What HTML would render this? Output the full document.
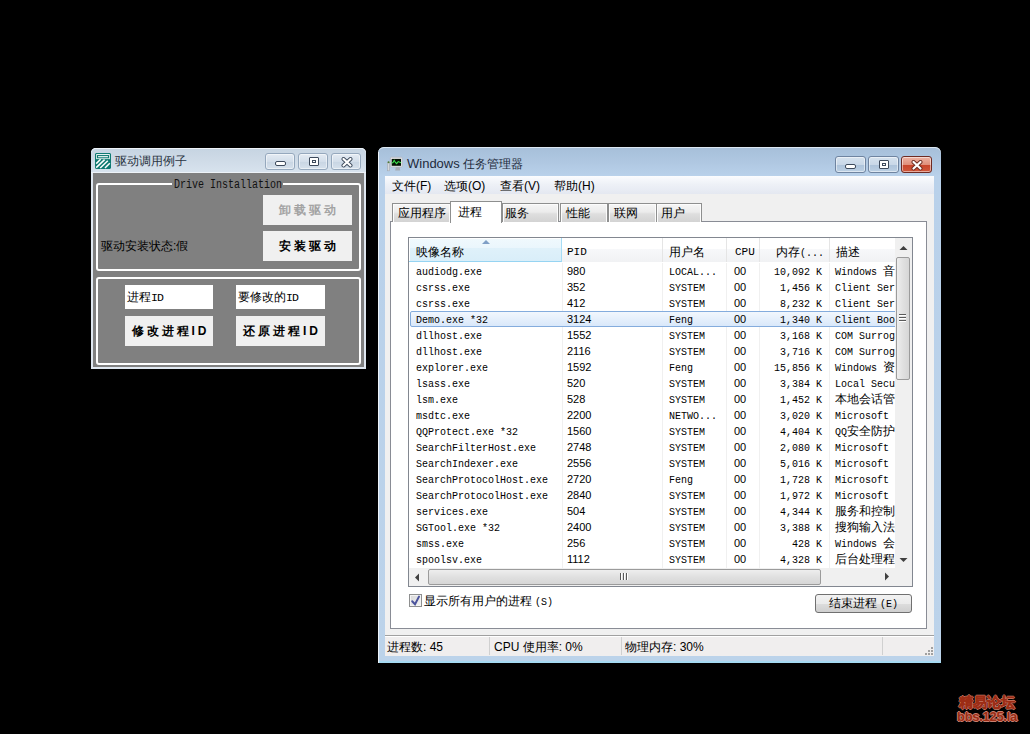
<!DOCTYPE html>
<html><head><meta charset="utf-8">
<style>
*{margin:0;padding:0;box-sizing:border-box}
html,body{width:1030px;height:734px;background:#000;overflow:hidden;font-family:"Liberation Sans",sans-serif;}
.a{position:absolute}
.t{position:absolute;white-space:nowrap;line-height:1}
/* left window */
#lw{left:91px;top:148px;width:275px;height:221px;background:#dfe7f0;border-radius:5px 5px 0 0;}
.cap{position:absolute;top:5px;width:30px;height:17px;border:1px solid #95a8bd;border-radius:3px;background:linear-gradient(#e4ebf3,#d3deea 50%,#c8d5e3 51%,#d6e1ec);box-shadow:inset 0 0 0 1px rgba(255,255,255,.5)}
.gb{position:absolute;border:2px solid #fff;border-radius:3px}
.btn{position:absolute;background:#f0f0f0;font-weight:bold;text-align:center;}
.edit{position:absolute;background:#fff;}
/* task manager */
#tm{left:378px;top:147px;width:563px;height:516px;background:linear-gradient(#a6bfd9,#b0c8e2 16px,#b9d1ea 29px,#bcd3ea);border-radius:6px 6px 0 0;box-shadow:inset 0 1px 0 #dde8f2}
.mono{font-family:"Liberation Mono",monospace;}
.tab{position:absolute;top:203px;height:19px;border:1px solid #8e8f8f;border-bottom:none;background:linear-gradient(#f6f6f6,#ebebeb 45%,#dedede 55%,#d3d3d3);box-shadow:inset 1px 1px 0 #fcfcfc,inset -1px 0 0 #fcfcfc;font-size:12px;}
.r{font-size:10px;color:#000}
.cj{font-size:12px;line-height:0}
.pid{font-size:11px;color:#000}
.row{position:absolute;left:0;width:486px;height:16px}
</style></head><body>

<!-- LEFT WINDOW -->
<div id="lw" class="a">
  <div class="a" style="left:0;top:0;width:275px;height:25px;background:linear-gradient(#c6d4e2,#cfdbe7 50%,#d8e3ee);border-radius:5px 5px 0 0;box-shadow:inset 0 1px 0 #eef3f8,inset 0 -1px 0 #eef3f8"></div>
  <div class="a" style="left:2px;top:25px;width:271px;height:194px;background:#808080"></div>
</div>


<!-- left window content -->
<svg class="a" style="left:95px;top:153px" width="16" height="16" viewBox="0 0 16 16">
 <path d="M1 0 H15 L16 1 V15 L15 16 H1 L0 15 V1 Z" fill="#0f7a72"/>
 <rect x="1.2" y="1.1" width="13.6" height="5.2" fill="#fff"/>
 <rect x="2.5" y="2.6" width="11" height="2.2" fill="none" stroke="#0f7a72" stroke-width="1.1"/>
 <rect x="1.2" y="6.3" width="13.6" height="8.6" fill="#0f7a72"/>
 <path d="M1.2 10.6 L5.6 6.3 M1.2 14.6 L9.6 6.6 M5.2 15 L12.8 7.8 M10 15 L14.8 10.2" stroke="#fff" stroke-width="1.5"/>
</svg>
<div class="t" style="left:115px;top:155px;font-size:12px;color:#2a3442">驱动调用例子</div>
<div class="cap" style="left:265px;top:153px"><div class="a" style="left:9px;top:7px;width:11px;height:5px;border:1px solid #3d4a5c;background:#fff;border-radius:2px"></div></div>
<div class="cap" style="left:298px;top:153px"><div class="a" style="left:10px;top:3px;width:10px;height:9px;border:1px solid #3d4a5c;border-radius:1px;background:#fff"><div class="a" style="left:2px;top:2px;width:4px;height:3px;border:1px solid #3d4a5c"></div></div></div>
<div class="cap" style="left:331px;top:153px"><svg class="a" style="left:8px;top:3px" width="14" height="11" viewBox="0 0 14 11"><path d="M3.5 2 L10.5 8.5 M10.5 2 L3.5 8.5" stroke="#3d4a5c" stroke-width="4" stroke-linecap="round"/><path d="M3.5 2 L10.5 8.5 M10.5 2 L3.5 8.5" stroke="#fff" stroke-width="2.2" stroke-linecap="round"/></svg></div>

<div class="gb" style="left:96px;top:183px;width:265px;height:88px"></div>
<div class="t mono" style="left:172px;top:180px;height:10px;font-size:10px;color:#111;background:#808080;padding:0 1px 0 2px;transform:scaleY(1.2);transform-origin:0 0">Drive Installation</div>
<div class="btn" style="left:263px;top:195px;width:89px;height:30px;color:#a3a3a3;font-size:12px;line-height:30px;letter-spacing:3px;padding-left:3px">卸载驱动</div>
<div class="btn" style="left:263px;top:231px;width:89px;height:30px;color:#000;font-size:12px;line-height:30px;letter-spacing:3px;padding-left:3px">安装驱动</div>
<div class="t" style="left:101px;top:240px;font-size:12px;color:#000">驱动安装状态:假</div>

<div class="gb" style="left:96px;top:277px;width:265px;height:88px"></div>
<div class="edit" style="left:125px;top:285px;width:88px;height:24px"></div>
<div class="t" style="left:127px;top:291px;font-size:12px;color:#000">进程<span class="mono" style="font-size:11.5px;letter-spacing:-1px">ID</span></div>
<div class="edit" style="left:236px;top:285px;width:89px;height:24px"></div>
<div class="t" style="left:238px;top:291px;font-size:12px;color:#000">要修改的<span class="mono" style="font-size:11.5px;letter-spacing:-1px">ID</span></div>
<div class="btn" style="left:125px;top:316px;width:88px;height:30px;color:#000;font-size:12px;line-height:30px;letter-spacing:3px;padding-left:3px">修改进程ID</div>
<div class="btn" style="left:236px;top:316px;width:89px;height:30px;color:#000;font-size:12px;line-height:30px;letter-spacing:3px;padding-left:3px">还原进程ID</div>

<!-- TASK MANAGER -->
<div id="tm" class="a"></div>
<div class="a" style="left:385px;top:176px;width:549px;height:19px;background:linear-gradient(#fbfcfe,#eef1f7 45%,#e4e8f1);border-bottom:1px solid #c8ccd6"></div>
<div class="a" style="left:385px;top:194px;width:549px;height:441px;background:#f0f0f0"></div>
<div class="a" style="left:390px;top:221px;width:537px;height:408px;background:#fff;border:1px solid #898c95"></div>
<div class="a" style="left:385px;top:635px;width:549px;height:21px;background:#f0eeee;border-top:1px solid #a0a0a0;box-shadow:inset 0 1px 0 #fff"></div>
<div class="a" style="left:378px;top:661px;width:563px;height:2px;background:#a6daf2"></div>
<div class="a" style="left:378px;top:152px;width:1px;height:511px;background:#eef4fa"></div>


<!-- tm title -->
<svg class="a" style="left:387px;top:156px" width="17" height="16" viewBox="0 0 17 16">
 <rect x="0.6" y="6.2" width="2" height="8.6" fill="#d4d8dc" stroke="#a4aab2" stroke-width="0.6"/>
 <circle cx="1.6" cy="6.3" r="1" fill="#4c7a34"/>
 <path d="M8.8 11 L12.6 11 L13.2 14.6 L8.2 14.6 Z" fill="#a6acb4"/>
 <rect x="3.4" y="1.2" width="11.8" height="9.8" rx="0.8" fill="#e8e8ec" stroke="#b4b8c0" stroke-width="0.8"/>
 <rect x="4.7" y="2.9" width="9.3" height="6.9" fill="#041204"/>
 <path d="M4.7 7 L6 6.6 L7.2 4.3 L8.4 6.4 L9.6 7.6 L11.2 5.6 L14 6.8" stroke="#3ee04e" stroke-width="1.1" fill="none"/>
</svg>
<div class="t" style="left:407px;top:157px;font-size:13px;color:#1e2b3c">Windows <span style="font-size:12px">任务管理器</span></div>
<div class="cap" style="left:835px;top:156px;width:31px;height:17px;border-color:#6f84a0;background:linear-gradient(#d6e2ee,#c9d8e8 50%,#adc3da 52%,#bcd0e4)"><div class="a" style="left:9px;top:7px;width:11px;height:5px;border:1px solid #3d4a5c;background:#fff;border-radius:2px"></div></div>
<div class="cap" style="left:868px;top:156px;width:31px;height:17px;border-color:#6f84a0;background:linear-gradient(#d6e2ee,#c9d8e8 50%,#adc3da 52%,#bcd0e4)"><div class="a" style="left:10px;top:3px;width:10px;height:9px;border:1px solid #3d4a5c;border-radius:1px;background:#fff"><div class="a" style="left:2px;top:2px;width:4px;height:3px;border:1px solid #3d4a5c"></div></div></div>
<div class="cap" style="left:901px;top:156px;width:31px;height:17px;border-color:#6e2a22;background:linear-gradient(#eeb2a3,#e0907c 50%,#c8442a 52%,#d0583c)"><svg class="a" style="left:8px;top:3px" width="14" height="11" viewBox="0 0 14 11"><path d="M3.5 2 L10.5 8.5 M10.5 2 L3.5 8.5" stroke="#6b2a1f" stroke-width="4" stroke-linecap="round"/><path d="M3.5 2 L10.5 8.5 M10.5 2 L3.5 8.5" stroke="#fff" stroke-width="2.2" stroke-linecap="round"/></svg></div>

<!-- menu -->
<div class="t" style="left:392px;top:180px;font-size:12px;color:#000">文件(F)</div>
<div class="t" style="left:444px;top:180px;font-size:12px;color:#000">选项(O)</div>
<div class="t" style="left:500px;top:180px;font-size:12px;color:#000">查看(V)</div>
<div class="t" style="left:554px;top:180px;font-size:12px;color:#000">帮助(H)</div>

<!-- tabs -->
<div class="tab" style="left:392px;width:59px"><span class="t" style="left:5px;top:3px">应用程序</span></div>
<div class="tab" style="left:502px;width:57px"><span class="t" style="left:2px;top:3px">服务</span></div>
<div class="tab" style="left:560px;width:48px"><span class="t" style="left:5px;top:3px">性能</span></div>
<div class="tab" style="left:608px;width:49px"><span class="t" style="left:5px;top:3px">联网</span></div>
<div class="tab" style="left:656px;width:46px"><span class="t" style="left:4px;top:3px">用户</span></div>
<div class="tab" style="left:450px;top:201px;width:52px;height:22px;background:#fff;box-shadow:none"><span class="t" style="left:7px;top:4px">进程</span></div>

<!-- listview -->
<div class="a" style="left:408px;top:237px;width:505px;height:350px;border:1px solid #828790;background:#fff;overflow:hidden">
  <div class="a" style="left:0;top:0;width:504px;height:24px;background:linear-gradient(#fff,#fff 45%,#f7f8fa 45%,#f1f2f4)"></div>
  <div class="a" style="left:0;top:0;width:153px;height:24px;background:linear-gradient(#f0f9fd,#eaf6fc 45%,#dff1fa 45%,#d9eef9);border-right:1px solid #a6dcf5;border-bottom:1px solid #96d4f2;box-shadow:inset 1px 1px 0 #fff"></div>
  <div class="a" style="left:253px;top:0;width:1px;height:24px;background:#e5e5e5"></div>
  <div class="a" style="left:317px;top:0;width:1px;height:24px;background:#e5e5e5"></div>
  <div class="a" style="left:350px;top:0;width:1px;height:24px;background:#e5e5e5"></div>
  <div class="a" style="left:420px;top:0;width:1px;height:24px;background:#e5e5e5"></div>
  <div class="a" style="left:153px;top:25px;width:1px;height:305px;background:#f0f0f0"></div>
  <div class="a" style="left:253px;top:25px;width:1px;height:305px;background:#f0f0f0"></div>
  <div class="a" style="left:317px;top:25px;width:1px;height:305px;background:#f0f0f0"></div>
  <div class="a" style="left:350px;top:25px;width:1px;height:305px;background:#f0f0f0"></div>
  <div class="a" style="left:420px;top:25px;width:1px;height:305px;background:#f0f0f0"></div>
</div>
<!-- selected row -->
<div class="a" style="left:410px;top:311px;width:490px;height:16px;border:1px solid #84acdd;border-radius:2px;background:linear-gradient(#f2f7fd,#d9e8fa)"></div>
<svg class="a" style="left:482px;top:240px" width="8" height="5"><path d="M0 4 L4 0 L8 4 Z" fill="#7f9fc6"/></svg>
<div class="t" style="left:416px;top:246px;font-size:12px;color:#000">映像名称</div>
<div class="t mono" style="left:567px;top:247px;font-size:11px;color:#000">PID</div>
<div class="t" style="left:669px;top:246px;font-size:12px;color:#000">用户名</div>
<div class="t mono" style="left:735px;top:247px;font-size:11px;color:#000">CPU</div>
<div class="t" style="left:776px;top:246px;font-size:12px;color:#000">内存<span class="mono" style="font-size:10px">(...</span></div>
<div class="t" style="left:836px;top:246px;font-size:12px;color:#000">描述</div>
<!--ROWS-->
<div class="t mono r" style="left:416px;top:268px">audiodg.exe</div>
<div class="t pid" style="left:567px;top:266px">980</div>
<div class="t mono r" style="left:669px;top:268px">LOCAL...</div>
<div class="t pid" style="left:734px;top:266px">00</div>
<div class="t mono r" style="left:759px;width:63px;text-align:right;top:268px">10,092 K</div>
<div class="t mono r" style="left:416px;top:284px">csrss.exe</div>
<div class="t pid" style="left:567px;top:282px">352</div>
<div class="t mono r" style="left:669px;top:284px">SYSTEM</div>
<div class="t pid" style="left:734px;top:282px">00</div>
<div class="t mono r" style="left:759px;width:63px;text-align:right;top:284px">1,456 K</div>
<div class="t mono r" style="left:416px;top:300px">csrss.exe</div>
<div class="t pid" style="left:567px;top:298px">412</div>
<div class="t mono r" style="left:669px;top:300px">SYSTEM</div>
<div class="t pid" style="left:734px;top:298px">00</div>
<div class="t mono r" style="left:759px;width:63px;text-align:right;top:300px">8,232 K</div>
<div class="t mono r" style="left:416px;top:316px">Demo.exe *32</div>
<div class="t pid" style="left:567px;top:314px">3124</div>
<div class="t mono r" style="left:669px;top:316px">Feng</div>
<div class="t pid" style="left:734px;top:314px">00</div>
<div class="t mono r" style="left:759px;width:63px;text-align:right;top:316px">1,340 K</div>
<div class="t mono r" style="left:416px;top:332px">dllhost.exe</div>
<div class="t pid" style="left:567px;top:330px">1552</div>
<div class="t mono r" style="left:669px;top:332px">SYSTEM</div>
<div class="t pid" style="left:734px;top:330px">00</div>
<div class="t mono r" style="left:759px;width:63px;text-align:right;top:332px">3,168 K</div>
<div class="t mono r" style="left:416px;top:348px">dllhost.exe</div>
<div class="t pid" style="left:567px;top:346px">2116</div>
<div class="t mono r" style="left:669px;top:348px">SYSTEM</div>
<div class="t pid" style="left:734px;top:346px">00</div>
<div class="t mono r" style="left:759px;width:63px;text-align:right;top:348px">3,716 K</div>
<div class="t mono r" style="left:416px;top:364px">explorer.exe</div>
<div class="t pid" style="left:567px;top:362px">1592</div>
<div class="t mono r" style="left:669px;top:364px">Feng</div>
<div class="t pid" style="left:734px;top:362px">00</div>
<div class="t mono r" style="left:759px;width:63px;text-align:right;top:364px">15,856 K</div>
<div class="t mono r" style="left:416px;top:380px">lsass.exe</div>
<div class="t pid" style="left:567px;top:378px">520</div>
<div class="t mono r" style="left:669px;top:380px">SYSTEM</div>
<div class="t pid" style="left:734px;top:378px">00</div>
<div class="t mono r" style="left:759px;width:63px;text-align:right;top:380px">3,384 K</div>
<div class="t mono r" style="left:416px;top:396px">lsm.exe</div>
<div class="t pid" style="left:567px;top:394px">528</div>
<div class="t mono r" style="left:669px;top:396px">SYSTEM</div>
<div class="t pid" style="left:734px;top:394px">00</div>
<div class="t mono r" style="left:759px;width:63px;text-align:right;top:396px">1,452 K</div>
<div class="t mono r" style="left:416px;top:412px">msdtc.exe</div>
<div class="t pid" style="left:567px;top:410px">2200</div>
<div class="t mono r" style="left:669px;top:412px">NETWO...</div>
<div class="t pid" style="left:734px;top:410px">00</div>
<div class="t mono r" style="left:759px;width:63px;text-align:right;top:412px">3,020 K</div>
<div class="t mono r" style="left:416px;top:428px">QQProtect.exe *32</div>
<div class="t pid" style="left:567px;top:426px">1560</div>
<div class="t mono r" style="left:669px;top:428px">SYSTEM</div>
<div class="t pid" style="left:734px;top:426px">00</div>
<div class="t mono r" style="left:759px;width:63px;text-align:right;top:428px">4,404 K</div>
<div class="t mono r" style="left:416px;top:444px">SearchFilterHost.exe</div>
<div class="t pid" style="left:567px;top:442px">2748</div>
<div class="t mono r" style="left:669px;top:444px">SYSTEM</div>
<div class="t pid" style="left:734px;top:442px">00</div>
<div class="t mono r" style="left:759px;width:63px;text-align:right;top:444px">2,080 K</div>
<div class="t mono r" style="left:416px;top:460px">SearchIndexer.exe</div>
<div class="t pid" style="left:567px;top:458px">2556</div>
<div class="t mono r" style="left:669px;top:460px">SYSTEM</div>
<div class="t pid" style="left:734px;top:458px">00</div>
<div class="t mono r" style="left:759px;width:63px;text-align:right;top:460px">5,016 K</div>
<div class="t mono r" style="left:416px;top:476px">SearchProtocolHost.exe</div>
<div class="t pid" style="left:567px;top:474px">2720</div>
<div class="t mono r" style="left:669px;top:476px">Feng</div>
<div class="t pid" style="left:734px;top:474px">00</div>
<div class="t mono r" style="left:759px;width:63px;text-align:right;top:476px">1,728 K</div>
<div class="t mono r" style="left:416px;top:492px">SearchProtocolHost.exe</div>
<div class="t pid" style="left:567px;top:490px">2840</div>
<div class="t mono r" style="left:669px;top:492px">SYSTEM</div>
<div class="t pid" style="left:734px;top:490px">00</div>
<div class="t mono r" style="left:759px;width:63px;text-align:right;top:492px">1,972 K</div>
<div class="t mono r" style="left:416px;top:508px">services.exe</div>
<div class="t pid" style="left:567px;top:506px">504</div>
<div class="t mono r" style="left:669px;top:508px">SYSTEM</div>
<div class="t pid" style="left:734px;top:506px">00</div>
<div class="t mono r" style="left:759px;width:63px;text-align:right;top:508px">4,344 K</div>
<div class="t mono r" style="left:416px;top:524px">SGTool.exe *32</div>
<div class="t pid" style="left:567px;top:522px">2400</div>
<div class="t mono r" style="left:669px;top:524px">SYSTEM</div>
<div class="t pid" style="left:734px;top:522px">00</div>
<div class="t mono r" style="left:759px;width:63px;text-align:right;top:524px">3,388 K</div>
<div class="t mono r" style="left:416px;top:540px">smss.exe</div>
<div class="t pid" style="left:567px;top:538px">256</div>
<div class="t mono r" style="left:669px;top:540px">SYSTEM</div>
<div class="t pid" style="left:734px;top:538px">00</div>
<div class="t mono r" style="left:759px;width:63px;text-align:right;top:540px">428 K</div>
<div class="t mono r" style="left:416px;top:556px">spoolsv.exe</div>
<div class="t pid" style="left:567px;top:554px">1112</div>
<div class="t mono r" style="left:669px;top:556px">SYSTEM</div>
<div class="t pid" style="left:734px;top:554px">00</div>
<div class="t mono r" style="left:759px;width:63px;text-align:right;top:556px">4,328 K</div>
<div class="a" style="left:829px;top:263px;width:66px;height:305px;overflow:hidden"><div class="t mono r" style="left:6px;top:5px">Windows <span class="cj">音</span></div>
<div class="t mono r" style="left:6px;top:21px">Client Ser</div>
<div class="t mono r" style="left:6px;top:37px">Client Ser</div>
<div class="t mono r" style="left:6px;top:53px">Client Boo</div>
<div class="t mono r" style="left:6px;top:69px">COM Surrog</div>
<div class="t mono r" style="left:6px;top:85px">COM Surrog</div>
<div class="t mono r" style="left:6px;top:101px">Windows <span class="cj">资</span></div>
<div class="t mono r" style="left:6px;top:117px">Local Secu</div>
<div class="t mono r" style="left:6px;top:133px"><span class="cj">本地会话管</span></div>
<div class="t mono r" style="left:6px;top:149px">Microsoft </div>
<div class="t mono r" style="left:6px;top:165px">QQ<span class="cj">安全防护</span></div>
<div class="t mono r" style="left:6px;top:181px">Microsoft </div>
<div class="t mono r" style="left:6px;top:197px">Microsoft </div>
<div class="t mono r" style="left:6px;top:213px">Microsoft </div>
<div class="t mono r" style="left:6px;top:229px">Microsoft </div>
<div class="t mono r" style="left:6px;top:245px"><span class="cj">服务和控制</span></div>
<div class="t mono r" style="left:6px;top:261px"><span class="cj">搜狗输入法</span></div>
<div class="t mono r" style="left:6px;top:277px">Windows <span class="cj">会</span></div>
<div class="t mono r" style="left:6px;top:293px"><span class="cj">后台处理程</span></div></div>
<!--/ROWS-->
<!-- vertical scrollbar -->
<div class="a" style="left:895px;top:238px;width:17px;height:330px;background:#f0f0f0"></div>
<svg class="a" style="left:899px;top:245px" width="9" height="6"><path d="M0.5 5 L4.5 1 L8.5 5 Z" fill="#404040"/></svg>
<div class="a" style="left:896px;top:257px;width:14px;height:123px;border:1px solid #9b9b9b;border-radius:2px;background:linear-gradient(90deg,#eee,#e0e0e0 50%,#d6d6d6)"></div>
<div class="a" style="left:899px;top:314px;width:7px;height:2px;border-top:1px solid #5a5a5a;border-bottom:1px solid #fff"></div>
<div class="a" style="left:899px;top:317px;width:7px;height:2px;border-top:1px solid #5a5a5a;border-bottom:1px solid #fff"></div>
<div class="a" style="left:899px;top:320px;width:7px;height:2px;border-top:1px solid #5a5a5a;border-bottom:1px solid #fff"></div>
<svg class="a" style="left:899px;top:557px" width="9" height="6"><path d="M0.5 1 L4.5 5 L8.5 1 Z" fill="#404040"/></svg>
<!-- horizontal scrollbar -->
<div class="a" style="left:409px;top:568px;width:503px;height:18px;background:#f0f0f0"></div>
<svg class="a" style="left:414px;top:573px" width="6" height="9"><path d="M5 0.5 L1 4.5 L5 8.5 Z" fill="#404040"/></svg>
<div class="a" style="left:428px;top:569px;width:393px;height:16px;border:1px solid #9b9b9b;border-radius:2px;background:linear-gradient(#eee,#e0e0e0 50%,#d6d6d6)"></div>
<div class="a" style="left:620px;top:573px;width:2px;height:7px;border-left:1px solid #5a5a5a;border-right:1px solid #fff"></div>
<div class="a" style="left:623px;top:573px;width:2px;height:7px;border-left:1px solid #5a5a5a;border-right:1px solid #fff"></div>
<div class="a" style="left:626px;top:573px;width:2px;height:7px;border-left:1px solid #5a5a5a;border-right:1px solid #fff"></div>
<svg class="a" style="left:884px;top:572px" width="6" height="9"><path d="M1 0.5 L5 4.5 L1 8.5 Z" fill="#404040"/></svg>

<!-- checkbox -->
<div class="a" style="left:409px;top:594px;width:13px;height:13px;border:1px solid #8e8f8f;background:linear-gradient(135deg,#d8d8d8,#f4f4f4);box-shadow:inset 0 0 0 1px #f4f4f4"></div>
<svg class="a" style="left:409px;top:594px" width="13" height="13"><path d="M3.2 7.2 L6 10.2 L10 2.6" stroke="#4b539c" stroke-width="2" fill="none" stroke-linecap="round"/></svg>
<div class="t" style="left:424px;top:595px;font-size:12px;color:#000">显示所有用户的进程<span class="mono" style="font-size:10px;margin-left:3px">(S)</span></div>
<!-- end process button -->
<div class="a" style="left:815px;top:594px;width:97px;height:19px;border:1px solid #707070;border-radius:3px;background:linear-gradient(#f2f2f2,#ebebeb 50%,#dddddd 50%,#cfcfcf)"></div>
<div class="t" style="left:829px;top:597px;font-size:12px;color:#000">结束进程<span class="mono" style="font-size:10px;margin-left:3px">(E)</span></div>

<!-- status -->
<div class="t" style="left:387px;top:641px;font-size:12px;color:#000">进程数: 45</div>
<div class="a" style="left:489px;top:637px;width:1px;height:18px;background:#d0d0d0"></div>
<div class="t" style="left:494px;top:641px;font-size:12px;color:#000">CPU 使用率: 0%</div>
<div class="a" style="left:621px;top:637px;width:1px;height:18px;background:#d0d0d0"></div>
<div class="t" style="left:625px;top:641px;font-size:12px;color:#000">物理内存: 30%</div>
<div class="a" style="left:882px;top:637px;width:1px;height:18px;background:#d0d0d0"></div>

<svg class="a" style="left:924px;top:646px" width="10" height="10"><g fill="#a0a0a0"><rect x="7" y="1" width="2" height="2"/><rect x="4" y="4" width="2" height="2"/><rect x="7" y="4" width="2" height="2"/><rect x="1" y="7" width="2" height="2"/><rect x="4" y="7" width="2" height="2"/><rect x="7" y="7" width="2" height="2"/></g></svg>
<!-- watermark -->
<div class="t" style="left:959px;top:695px;font-size:14px;font-weight:bold;color:#9c2c14;text-shadow:1px 0 0 #c98070,-1px 0 0 #c98070,0 1px 0 #c98070,0 -1px 0 #c98070;-webkit-text-stroke:0.4px #9c2c14">精易论坛</div>
<div class="t" style="left:957px;top:710px;font-size:13px;font-weight:bold;letter-spacing:-0.3px;color:#9c2c14;text-shadow:1px 0 0 #c98070,-1px 0 0 #c98070,0 1px 0 #c98070,0 -1px 0 #c98070">bbs.125.la</div>

</body></html>
